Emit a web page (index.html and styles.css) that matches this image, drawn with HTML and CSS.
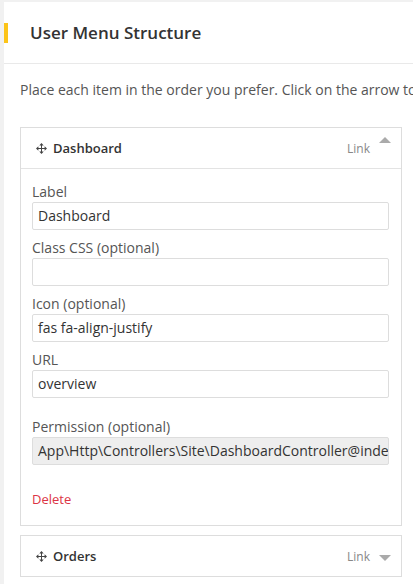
FILE: index.html
```html
<!DOCTYPE html>
<html>
<head>
<meta charset="utf-8">
<link rel="stylesheet" href="styles.css">
</head>
<body>
<div class="card">
  <div class="card-header">
    <h2 class="card-title">User Menu Structure</h2>
  </div>
  <div class="card-body">
    <p class="intro">Place each item in the order you prefer. Click on the arrow to the right of an item to reveal more configuration options.</p>
    <div class="menu-list">
      <div class="menu-item open">
        <div class="item-head">
          <span class="item-title">
            <svg class="move" viewBox="0 0 11 11" width="11" height="11"><path d="M5.5 1.8 V9.2 M1.8 5.5 H9.2" stroke="#444" stroke-width="1" fill="none"/><path d="M5.5 0 L7.7 2.4 H3.3 Z M5.5 11 L7.7 8.6 H3.3 Z M0 5.5 L2.4 3.3 V7.7 Z M11 5.5 L8.6 3.3 V7.7 Z" fill="#444"/></svg>
            Dashboard
          </span>
          <span class="item-type">Link</span>
          <span class="caret up"></span>
        </div>
        <div class="item-body">
          <div class="field">
            <label class="field-label">Label</label>
            <div class="input">Dashboard</div>
          </div>
          <div class="field">
            <label class="field-label">Class CSS (optional)</label>
            <div class="input"></div>
          </div>
          <div class="field">
            <label class="field-label">Icon (optional)</label>
            <div class="input">fas fa-align-justify</div>
          </div>
          <div class="field">
            <label class="field-label">URL</label>
            <div class="input">overview</div>
          </div>
          <div class="field permission">
            <label class="field-label">Permission (optional)</label>
            <div class="input disabled">App\Http\Controllers\Site\DashboardController@index</div>
          </div>
          <a class="delete">Delete</a>
        </div>
      </div>
      <div class="menu-item">
        <div class="item-head">
          <span class="item-title">
            <svg class="move" viewBox="0 0 11 11" width="11" height="11"><path d="M5.5 1.8 V9.2 M1.8 5.5 H9.2" stroke="#444" stroke-width="1" fill="none"/><path d="M5.5 0 L7.7 2.4 H3.3 Z M5.5 11 L7.7 8.6 H3.3 Z M0 5.5 L2.4 3.3 V7.7 Z M11 5.5 L8.6 3.3 V7.7 Z" fill="#444"/></svg>
            Orders
          </span>
          <span class="item-type">Link</span>
          <span class="caret down"></span>
        </div>
      </div>
    </div>
  </div>
</div>
</body>
</html>
```
FILE: styles.css
```css
html, body {
  margin: 0;
  padding: 0;
  background: #f1f1f1;
  overflow: hidden;
}
body {
  font-family: "Open Sans", "Liberation Sans", sans-serif;
  color: #333;
  padding: 2px 0 0 4px;
}
.card {
  background: #fff;
  width: 640px;
  min-height: 620px;
}
.card-header {
  height: 61px;
  border-bottom: 1px solid #e9e9e9;
  display: flex;
  align-items: center;
  position: relative;
}
.card-header::before {
  content: "";
  position: absolute;
  left: 0;
  top: 21px;
  width: 4px;
  height: 20px;
  background: #fcc419;
}
.card-title {
  margin: 0 0 0 26px;
  font-size: 17px;
  font-weight: 600;
  color: #333;
}
.card-body {
  padding: 16px 16px;
}
.intro {
  margin: 0 0 27px 0;
  font-size: 14px;
  line-height: 20px;
  color: #555;
  white-space: nowrap;
}
.menu-list {
  width: 382px;
  display: flex;
  flex-direction: column;
  gap: 9px;
}
.menu-item {
  border: 1px solid #ddd;
  background: #fff;
}
.item-head {
  height: 40px;
  display: flex;
  align-items: center;
  padding: 0 10px 0 15px;
  font-size: 13px;
}
.open .item-head {
  border-bottom: 1px solid #e3e3e3;
}
.item-title {
  flex: 1;
  display: flex;
  align-items: center;
  font-weight: 600;
  color: #333;
}
.move {
  display: block;
  margin-right: 6px;
}
.item-type {
  color: #888;
  font-size: 12px;
  margin-right: 9px;
}
.caret {
  width: 0;
  height: 0;
  border-left: 6px solid transparent;
  border-right: 6px solid transparent;
}
.caret.up {
  border-bottom: 6px solid #aaa;
  align-self: flex-start;
  margin-top: 9px;
}
.caret.down {
  border-top: 6px solid #aaa;
  margin-top: 3px;
}
.item-body {
  padding: 13px 12px 17px 11px;
}
.field {
  margin-bottom: 8px;
}
.field-label {
  display: block;
  font-size: 14px;
  line-height: 20px;
  color: #555;
}
.input {
  height: 26px;
  border: 1px solid #ddd;
  font-size: 14px;
  line-height: 26px;
  padding: 0 5px;
  color: #333;
  white-space: nowrap;
  overflow: hidden;
  border-radius: 2px;
}
.input.disabled {
  background: #eee;
}
.permission {
  margin-top: 19px;
  margin-bottom: 0;
}
.delete {
  display: block;
  margin-top: 25px;
  color: #dc3545;
  font-size: 13px;
  line-height: 18px;
}
```
